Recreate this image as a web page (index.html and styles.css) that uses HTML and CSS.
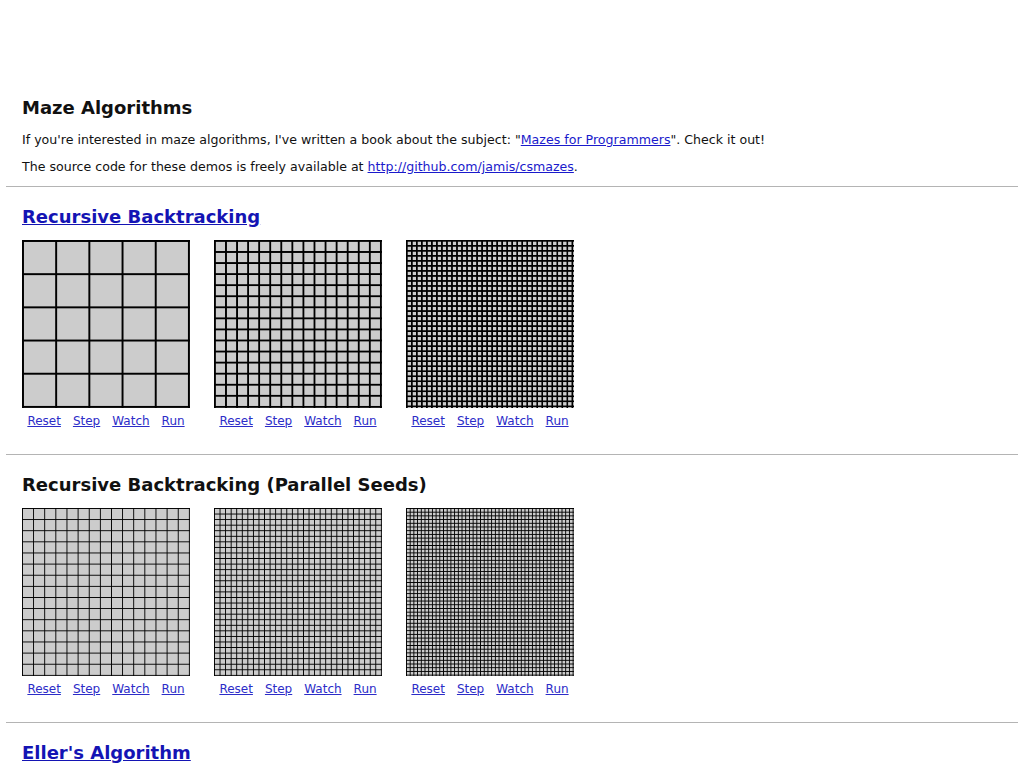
FILE: index.html
```html
<!DOCTYPE html>
<html lang="en">
<head>
    <meta charset="UTF-8">
    <title>Maze Algorithms</title>
    <link rel="stylesheet" href="styles.css">
</head>
<body>

<div class="intro">
    <h1>Maze Algorithms</h1>
    <p>If you're interested in maze algorithms, I've written a book about the subject: "<a href="#">Mazes for Programmers</a>". Check it out!</p>
    <p>The source code for these demos is freely available at <a href="#">http://github.com/jamis/csmazes</a>.</p>
</div>

<hr>

<!-- Recursive Backtracking -->
<div class="section">
    <h2><a href="#">Recursive Backtracking</a></h2>
    <div class="mazes">
        <div class="widget">
            <div class="maze" style="--n: 5;"></div>
            <div class="links"><a href="#">Reset</a><a href="#">Step</a><a href="#">Watch</a><a href="#">Run</a></div>
        </div>
        <div class="widget">
            <div class="maze" style="--n: 15;"></div>
            <div class="links"><a href="#">Reset</a><a href="#">Step</a><a href="#">Watch</a><a href="#">Run</a></div>
        </div>
        <div class="widget">
            <div class="maze" style="--n: 33;"></div>
            <div class="links"><a href="#">Reset</a><a href="#">Step</a><a href="#">Watch</a><a href="#">Run</a></div>
        </div>
    </div>
</div>

<hr>

<!-- Recursive Backtracking (Parallel Seeds) -->
<div class="section">
    <h2>Recursive Backtracking (Parallel Seeds)</h2>
    <div class="mazes">
        <div class="widget">
            <div class="maze thin" style="--n: 15;"></div>
            <div class="links"><a href="#">Reset</a><a href="#">Step</a><a href="#">Watch</a><a href="#">Run</a></div>
        </div>
        <div class="widget">
            <div class="maze thin" style="--n: 30;"></div>
            <div class="links"><a href="#">Reset</a><a href="#">Step</a><a href="#">Watch</a><a href="#">Run</a></div>
        </div>
        <div class="widget">
            <div class="maze thin" style="--n: 45;"></div>
            <div class="links"><a href="#">Reset</a><a href="#">Step</a><a href="#">Watch</a><a href="#">Run</a></div>
        </div>
    </div>
</div>

<hr>

<!-- Eller's Algorithm -->
<div class="section">
    <h2><a href="#">Eller's Algorithm</a></h2>
</div>

</body>
</html>
```

FILE: styles.css
```css
body {
    font-family: "DejaVu Sans", Verdana, sans-serif;
    font-size: 12px;
    line-height: 16px;
    color: #111;
    background-color: #fff;
    margin: 0 6px;
    padding: 0;
}

a {
    color: #1a1acc;
}

.intro,
.section {
    padding: 0 16px;
}

h1 {
    font-size: 18px;
    line-height: 24px;
    margin: 96px 0 12px 0;
}

p {
    font-size: 12.6px;
    margin: 0 0 11px 0;
}

hr {
    border: none;
    border-top: 1px solid #b4b4b4;
    height: 0;
    margin: 10px 0 0 0;
}

.section + hr {
    margin-top: 25px;
}

h2 {
    font-size: 18px;
    line-height: 24px;
    margin: 18px 0 11px 0;
}

h2 a {
    color: #1414b4;
}

.mazes {
    display: flex;
    gap: 24px;
}

.widget {
    width: 168px;
}

.maze {
    --lw: 2px;
    width: 168px;
    height: 168px;
    background-color: #cccccc;
    background-image:
        linear-gradient(to right, #000 var(--lw), transparent var(--lw)),
        linear-gradient(to bottom, #000 var(--lw), transparent var(--lw));
    background-size:
        calc((168px - var(--lw)) / var(--n))
        calc((168px - var(--lw)) / var(--n));
}

.maze.thin {
    --lw: 1px;
}

.links {
    display: flex;
    justify-content: center;
    gap: 12px;
    margin-top: 5px;
}

.links a {
    color: #2c2cc8;
}
```
